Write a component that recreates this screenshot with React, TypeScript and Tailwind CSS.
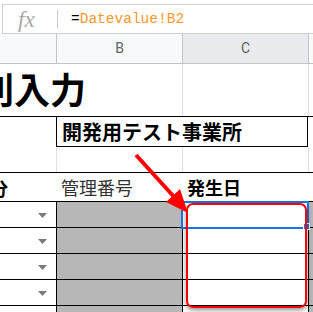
import React from "react";

const JP = "font-['Noto_Sans_CJK_JP','Noto_Sans',sans-serif]";

function Caret() {
  return (
    <svg width="9" height="5" viewBox="0 0 9 5" className="absolute left-[38px] top-[11px]">
      <path d="M0 0 H9 L4.5 5 Z" fill="#7a7a7a" />
    </svg>
  );
}

function DataRow({ last = false }: { last?: boolean }) {
  return (
    <div className={`flex h-[26px] shrink-0 ${last ? "" : "border-b border-black"}`}>
      <div className="relative w-[56px] shrink-0 bg-white">
        <Caret />
      </div>
      <div className="w-[126px] shrink-0 border-l border-black bg-[#b7b7b7]" />
      <div className="w-[126px] shrink-0 border-l border-black bg-white" />
      <div className="flex-1 border-l border-black bg-[#b7b7b7]" />
    </div>
  );
}

export default function App() {
  return (
    <div className={`relative h-[312px] w-[313px] overflow-hidden bg-white ${JP}`}>
      {/* formula bar */}
      <div className="h-[34px] pt-[4px]">
        <div className="flex h-[30px] items-center border-y border-l border-[#d0d0d0] ml-[2px]">
          <span className="ml-[15px] w-[22px] font-['Liberation_Serif',serif] text-[23px] italic leading-none text-[#a8a8a8]">
            fx
          </span>
          <span className="ml-[17px] h-[18px] w-px bg-[#c8c8c8]" />
          <span className="ml-[13px] font-['Liberation_Mono',monospace] text-[14.5px] leading-none">
            <span className="text-black">=</span>
            <span className="text-[#f7982a]">Datevalue!B2</span>
          </span>
        </div>
      </div>

      {/* column headers */}
      <div className="flex h-[30px] border-b border-[#c4c4c4] font-['Roboto',sans-serif] text-[14px] text-[#5f6368]">
        <div className="w-[56px] shrink-0 bg-[#f8f9fa]" />
        <div className="flex w-[126px] shrink-0 items-center justify-center border-l border-[#c4c4c4] bg-[#f8f9fa]">
          B
        </div>
        <div className="flex w-[126px] shrink-0 items-center justify-center border-l border-[#c4c4c4] bg-[#e8eaed]">
          C
        </div>
        <div className="flex-1 border-l border-[#c4c4c4] bg-[#f8f9fa]" />
      </div>

      {/* title row */}
      <div className="flex h-[53px] border-b border-black">
        <div className="relative w-[56px] shrink-0">
          <span className="absolute left-[-58px] top-[6px] whitespace-nowrap text-[36px] font-bold leading-none text-black">
            個別入力
          </span>
        </div>
        <div className="w-[126px] shrink-0" />
        <div className="w-[126px] shrink-0 border-l border-[#e0e0e0]" />
        <div className="flex-1 border-l border-[#e0e0e0]" />
      </div>

      {/* office row */}
      <div className="flex h-[30px]">
        <div className="w-[56px] shrink-0" />
        <div className="flex w-[252px] shrink-0 items-center border-x border-b border-black pl-[5px] text-[20px] font-bold leading-none text-black">
          開発用テスト事業所
        </div>
        <div className="flex-1" />
      </div>

      {/* empty row */}
      <div className="flex h-[26px] border-b border-black">
        <div className="w-[56px] shrink-0" />
        <div className="w-[126px] shrink-0 border-l border-[#e0e0e0]" />
        <div className="w-[126px] shrink-0 border-l border-[#e0e0e0]" />
        <div className="flex-1 border-l border-[#e0e0e0]" />
      </div>

      {/* header row */}
      <div className="flex h-[29px] border-b border-black text-[18px] leading-none">
        <div className="relative w-[56px] shrink-0">
          <span className="absolute left-[-28px] top-[6px] whitespace-nowrap font-bold text-black">区分</span>
        </div>
        <div className="flex w-[126px] shrink-0 items-center pl-[5px] text-[#333333]">管理番号</div>
        <div className="flex w-[126px] shrink-0 items-center pl-[5px] font-bold text-black">発生日</div>
        <div className="flex-1" />
      </div>

      <DataRow />
      <DataRow />
      <DataRow />
      <DataRow />
      <DataRow last />

      {/* selection */}
      <div className="pointer-events-none absolute left-[181px] top-[201px] h-[28px] w-[128px] border-2 border-[#1a73e8]" />
      <div className="absolute left-[303px] top-[223px] h-[7px] w-[7px] border border-white bg-[#1a73e8]" />

      {/* red highlight */}
      <div className="absolute left-[186px] top-[203px] h-[105px] w-[121px] rounded-[7px] border-[2.5px] border-[#ff0000] shadow-[0_2px_5px_rgba(0,0,0,0.45)]" />

      {/* arrow */}
      <svg className="absolute left-0 top-0" width="313" height="312" viewBox="0 0 313 312">
        <line x1="136" y1="155" x2="176" y2="199" stroke="#ff0000" strokeWidth="4" />
        <polygon points="188,213 166,202 180,189" fill="#ff0000" />
      </svg>
    </div>
  );
}
